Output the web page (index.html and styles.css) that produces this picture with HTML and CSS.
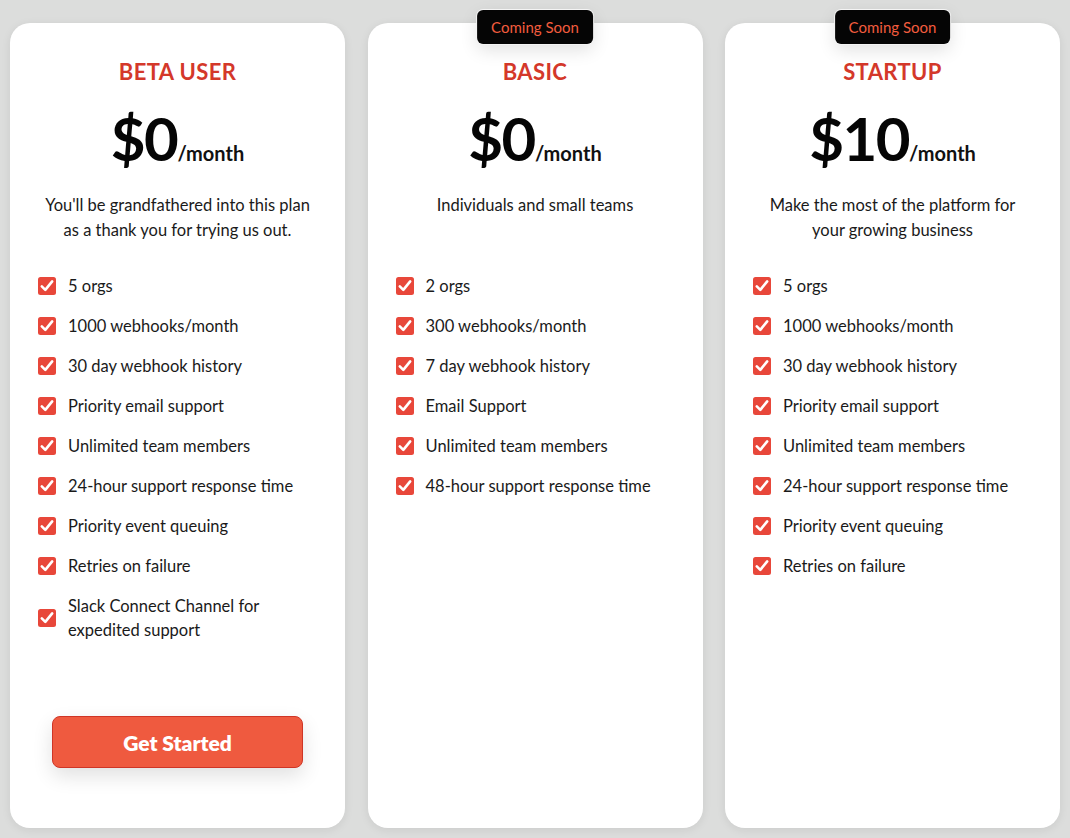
FILE: index.html
```html
<!DOCTYPE html>
<html>
<head>
<meta charset="utf-8">
<link rel="stylesheet" href="styles.css">
</head>
<body>
<svg width="0" height="0" class="defs">
  <defs>
    <symbol id="chk" viewBox="0 0 18 18">
      <rect x="0" y="0" width="18" height="18" rx="2.5" fill="#e8473a"/>
      <path d="M3.8 9.4 L7.3 12.9 L14.2 4.4" fill="none" stroke="#fff" stroke-width="2.6" stroke-linecap="round" stroke-linejoin="round"/>
    </symbol>
  </defs>
</svg>
<main class="plans">
  <section class="card">
    <h2 class="plan-name">BETA USER</h2>
    <div class="price"><span class="amount">$0</span><span class="per">/month</span></div>
    <p class="desc">You'll be grandfathered into this plan as a thank you for trying us out.</p>
    <ul class="features">
      <li><svg class="check"><use href="#chk"/></svg><span>5 orgs</span></li>
      <li><svg class="check"><use href="#chk"/></svg><span>1000 webhooks/month</span></li>
      <li><svg class="check"><use href="#chk"/></svg><span>30 day webhook history</span></li>
      <li><svg class="check"><use href="#chk"/></svg><span>Priority email support</span></li>
      <li><svg class="check"><use href="#chk"/></svg><span>Unlimited team members</span></li>
      <li><svg class="check"><use href="#chk"/></svg><span>24-hour support response time</span></li>
      <li><svg class="check"><use href="#chk"/></svg><span>Priority event queuing</span></li>
      <li><svg class="check"><use href="#chk"/></svg><span>Retries on failure</span></li>
      <li><svg class="check"><use href="#chk"/></svg><span>Slack Connect Channel for<br>expedited support</span></li>
    </ul>
    <button class="cta">Get Started</button>
  </section>
  <section class="card">
    <div class="badge">Coming Soon</div>
    <h2 class="plan-name">BASIC</h2>
    <div class="price"><span class="amount">$0</span><span class="per">/month</span></div>
    <p class="desc">Individuals and small teams</p>
    <ul class="features">
      <li><svg class="check"><use href="#chk"/></svg><span>2 orgs</span></li>
      <li><svg class="check"><use href="#chk"/></svg><span>300 webhooks/month</span></li>
      <li><svg class="check"><use href="#chk"/></svg><span>7 day webhook history</span></li>
      <li><svg class="check"><use href="#chk"/></svg><span>Email Support</span></li>
      <li><svg class="check"><use href="#chk"/></svg><span>Unlimited team members</span></li>
      <li><svg class="check"><use href="#chk"/></svg><span>48-hour support response time</span></li>
    </ul>
  </section>
  <section class="card">
    <div class="badge">Coming Soon</div>
    <h2 class="plan-name">STARTUP</h2>
    <div class="price"><span class="amount">$10</span><span class="per">/month</span></div>
    <p class="desc">Make the most of the platform for your growing business</p>
    <ul class="features">
      <li><svg class="check"><use href="#chk"/></svg><span>5 orgs</span></li>
      <li><svg class="check"><use href="#chk"/></svg><span>1000 webhooks/month</span></li>
      <li><svg class="check"><use href="#chk"/></svg><span>30 day webhook history</span></li>
      <li><svg class="check"><use href="#chk"/></svg><span>Priority email support</span></li>
      <li><svg class="check"><use href="#chk"/></svg><span>Unlimited team members</span></li>
      <li><svg class="check"><use href="#chk"/></svg><span>24-hour support response time</span></li>
      <li><svg class="check"><use href="#chk"/></svg><span>Priority event queuing</span></li>
      <li><svg class="check"><use href="#chk"/></svg><span>Retries on failure</span></li>
    </ul>
  </section>
</main>
</body>
</html>
```

FILE: styles.css
```css
* { box-sizing: border-box; }
html, body { margin: 0; padding: 0; }
body {
  background: #dcdddc;
  font-family: Lato, "Noto Sans", "Liberation Sans", sans-serif;
  color: #111;
  width: 1070px;
  height: 838px;
  overflow: hidden;
}
.defs { position: absolute; }
.plans {
  display: grid;
  grid-template-columns: repeat(3, 335px);
  column-gap: 22.5px;
  padding: 23px 10px 10px 10px;
  height: 838px;
}
.card {
  position: relative;
  background: #fff;
  border-radius: 20px;
  box-shadow: 0 2px 10px rgba(0,0,0,0.08);
  display: flex;
  flex-direction: column;
  align-items: center;
  padding: 36px 28px 60px 28px;
}
.badge {
  position: absolute;
  top: -13px;
  left: 50%;
  transform: translateX(-50%);
  background: #050505;
  color: #f25c3e;
  font-size: 15px;
  line-height: 34px;
  height: 34px;
  padding: 0 14px;
  border-radius: 6px;
  box-shadow: 0 0 0 1px #f4f4f4, 0 6px 18px rgba(0,0,0,0.12);
  white-space: nowrap;
}
.plan-name {
  margin: 0;
  font-size: 22px;
  line-height: 26px;
  font-weight: 700;
  color: #d4382a;
  letter-spacing: 0.4px;
}
.price {
  margin-top: 16px;
  display: flex;
  align-items: baseline;
  height: 74px;
}
.amount {
  font-size: 60px;
  font-weight: 700;
  line-height: 74px;
  color: #050505;
  letter-spacing: -1.5px;
}
.per {
  font-size: 20px;
  font-weight: 700;
  color: #111;
}
.desc {
  margin: 18px 0 0 0;
  width: 272px;
  font-size: 16.5px;
  line-height: 25px;
  text-align: center;
  color: #1a1a1a;
  min-height: 50px;
}
.features {
  list-style: none;
  margin: 31px 0 0 0;
  padding: 0;
  align-self: stretch;
}
.features li {
  display: flex;
  align-items: center;
  gap: 12px;
  font-size: 16.5px;
  line-height: 24px;
  color: #1a1a1a;
  min-height: 24px;
  margin-bottom: 16px;
}
.check {
  width: 18px;
  height: 18px;
  flex: none;
}
.cta {
  margin-top: auto;
  width: 251px;
  height: 52px;
  background: #ef5a3f;
  border: 1px solid #cf3526;
  border-radius: 8px;
  color: #fff;
  font-family: inherit;
  font-size: 21px;
  font-weight: 800;
  box-shadow: 0 8px 20px rgba(0,0,0,0.12);
  cursor: pointer;
}
```
